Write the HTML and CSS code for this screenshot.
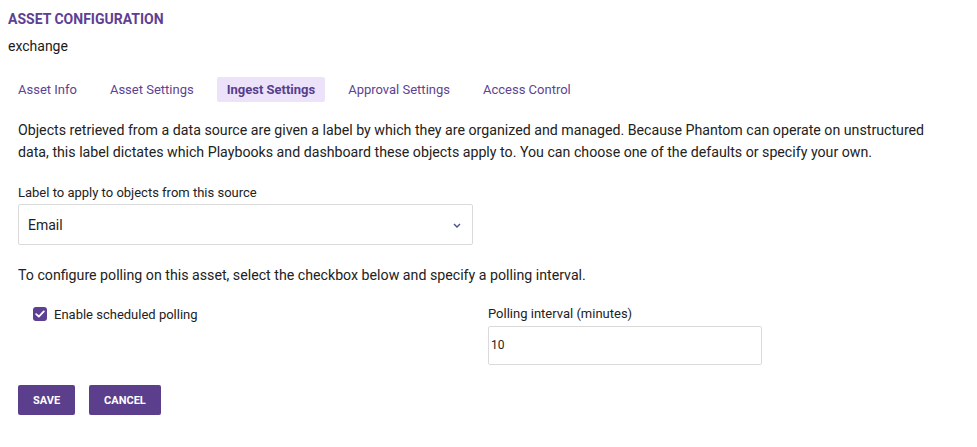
FILE: index.html
```html
<!DOCTYPE html>
<html>
<head>
<meta charset="utf-8">
<link rel="stylesheet" href="styles.css">
</head>
<body>
<div class="page">
  <div class="title">ASSET CONFIGURATION</div>
  <div class="asset-name">exchange</div>
  <nav class="tabs">
    <span class="tab">Asset Info</span>
    <span class="tab">Asset Settings</span>
    <span class="tab active">Ingest Settings</span>
    <span class="tab">Approval Settings</span>
    <span class="tab">Access Control</span>
  </nav>
  <div class="content">
    <p class="intro">Objects retrieved from a data source are given a label by which they are organized and managed. Because Phantom can operate on unstructured data, this label dictates which Playbooks and dashboard these objects apply to. You can choose one of the defaults or specify your own.</p>
    <div class="field-label">Label to apply to objects from this source</div>
    <div class="select">
      <span>Email</span>
      <svg class="chev" width="8" height="5" viewBox="0 0 8 5"><path d="M1 1 L4 4 L7 1" fill="none" stroke="#4a4f8a" stroke-width="1.4"/></svg>
    </div>
    <p class="polling-text">To configure polling on this asset, select the checkbox below and specify a polling interval.</p>
    <div class="poll-row">
      <div class="check-col">
        <span class="checkbox"><svg width="10" height="8" viewBox="0 0 10 8"><path d="M1.2 4.2 L3.8 6.6 L8.8 1.4" fill="none" stroke="#fff" stroke-width="1.8" stroke-linecap="round" stroke-linejoin="round"/></svg></span>
        <span class="check-label">Enable scheduled polling</span>
      </div>
      <div class="interval-col">
        <div class="interval-label">Polling interval (minutes)</div>
        <div class="input">10</div>
      </div>
    </div>
    <div class="buttons">
      <button class="btn">SAVE</button>
      <button class="btn">CANCEL</button>
    </div>
  </div>
</div>
</body>
</html>
```
FILE: styles.css
```css
* { box-sizing: border-box; }
body {
  margin: 0;
  background: #fff;
  font-family: Roboto, "Liberation Sans", sans-serif;
  color: #1f1f1f;
}
.page { padding: 10px 8px 0 8px; }
.title {
  font-size: 14px;
  font-weight: 700;
  color: #5d4092;
  line-height: 18px;
}
.asset-name {
  margin-top: 9px;
  font-size: 14px;
  line-height: 18px;
  color: #1a1a1a;
}
.tabs {
  display: flex;
  gap: 13px;
  margin-top: 22px;
}
.tab {
  font-size: 13px;
  color: #5d4392;
  padding: 0 10px;
  height: 25px;
  line-height: 25px;
  border-radius: 2px;
}
.tab.active {
  background: #ece3fb;
  font-weight: 700;
  color: #573d8c;
}
.content { padding-left: 10px; }
.intro {
  margin: 17px 0 0 0;
  max-width: 930px;
  font-size: 14.2px;
  line-height: 22px;
  color: #222;
}
.field-label {
  margin-top: 22px;
  font-size: 13px;
  line-height: 16px;
  color: #222;
}
.select {
  margin-top: 3px;
  width: 455px;
  height: 41px;
  border: 1px solid #dadada;
  border-radius: 2px;
  display: flex;
  align-items: center;
  justify-content: space-between;
  padding: 0 11px 0 9px;
  font-size: 14px;
  color: #222;
}
.chev { margin-top: 1px; }
.polling-text {
  margin: 21px 0 0 0;
  font-size: 14.2px;
  line-height: 18px;
  color: #222;
}
.poll-row {
  display: flex;
  margin-top: 19px;
}
.check-col {
  width: 470px;
  display: flex;
  align-items: center;
  gap: 7px;
  padding-left: 15px;
  height: 20px;
  margin-top: 1px;
}
.checkbox {
  width: 14px;
  height: 14px;
  border-radius: 3px;
  background: #5d4092;
  display: inline-flex;
  align-items: center;
  justify-content: center;
}
.check-label { font-size: 13px; color: #222; }
.interval-label {
  font-size: 13px;
  line-height: 16px;
  color: #222;
  margin-top: 3px;
}
.input {
  margin-top: 4px;
  width: 274px;
  height: 39px;
  border: 1px solid #dadada;
  border-radius: 2px;
  padding: 0 0 0 2px;
  line-height: 37px;
  font-size: 12px;
  color: #222;
}
.buttons {
  display: flex;
  gap: 14px;
  margin-top: 20px;
}
.btn {
  height: 30px;
  border: none;
  border-radius: 2px;
  background: #5b3f8c;
  color: #fff;
  font-family: Roboto, "Liberation Sans", sans-serif;
  font-weight: 700;
  font-size: 11px;
  padding: 0 15px;
}
```
